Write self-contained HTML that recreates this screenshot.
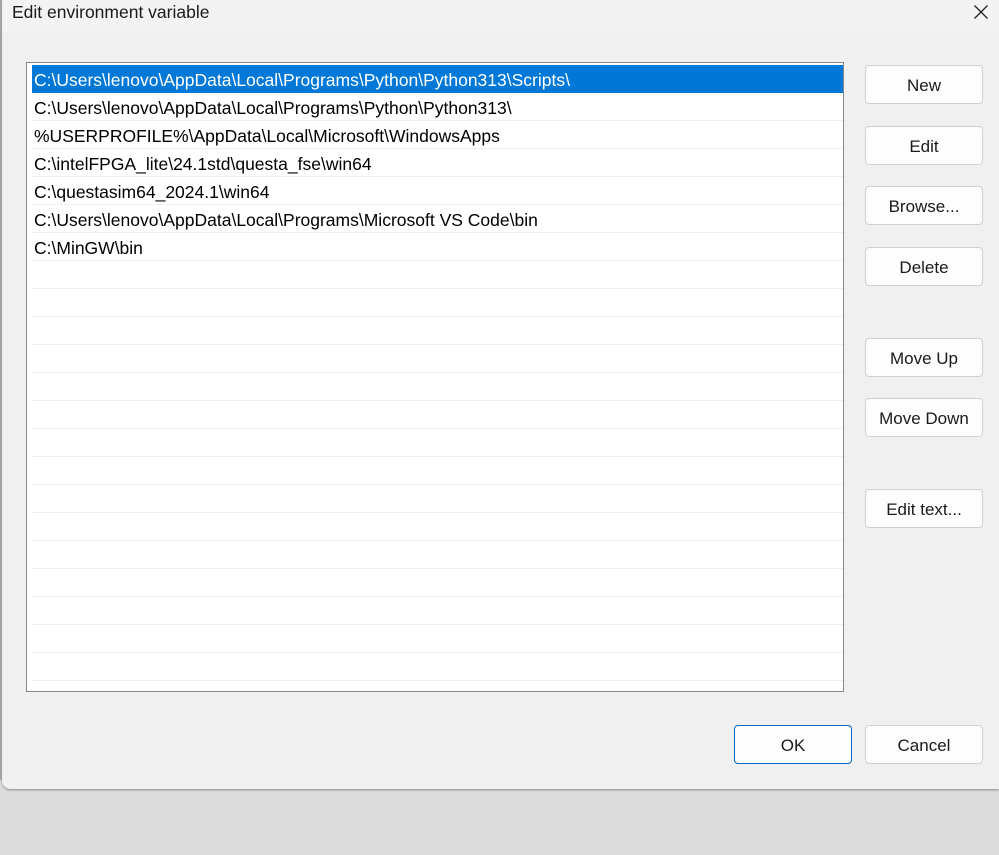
<!DOCTYPE html>
<html><head><style>
*{margin:0;padding:0;box-sizing:border-box}
body{width:999px;height:855px;overflow:hidden;background:linear-gradient(#b4b4b4 0px,#cfcfcf 40px,#dcdcdc 67px);position:relative;font-family:"Liberation Sans",sans-serif;color:#000}
.dlg{position:absolute;left:2px;top:0;width:997px;height:789px;background:#f0f0f0;border-bottom-left-radius:8px;box-shadow:0 1px 2px #888}
.strip{position:absolute;left:0;top:0;width:2px;height:780px;background:#a9a9a9}
.title{position:absolute;left:0;top:0;width:997px;height:32px;background:#f3f3f3}
.title span{position:absolute;left:10px;top:2px;font-size:17.5px;color:#1a1a1a}
.x{position:absolute;left:971px;top:4px}
.list{position:absolute;left:24px;top:62px;width:818px;height:630px;background:#fff;border:1px solid #828790;overflow:hidden}
.row{position:absolute;left:5px;width:811px;height:28px;border-bottom:1px solid #f0f0f0;font-size:17.5px;line-height:31px;padding-left:2px;white-space:nowrap}
.sel{background:#0078d7;color:#fff;border-bottom:none}
.btn{position:absolute;width:118px;height:39px;background:#fdfdfd;border:1px solid #d0d0d0;border-radius:4px;font-size:17px;text-align:center;line-height:39px;color:#1a1a1a}
.ok{border:1px solid #0067c0}
</style></head><body>
<div class="strip"></div>
<div class="dlg">
<div class="title"><span>Edit environment variable</span>
<svg class="x" width="16" height="16" viewBox="0 0 16 16"><path d="M1.5 1.5L14.5 14.5M14.5 1.5L1.5 14.5" stroke="#222" stroke-width="1.3"/></svg></div>
<div class="list">
<div class="row sel" style="top:2px">C:\Users\lenovo\AppData\Local\Programs\Python\Python313\Scripts\</div>
<div class="row" style="top:30px">C:\Users\lenovo\AppData\Local\Programs\Python\Python313\</div>
<div class="row" style="top:58px">%USERPROFILE%\AppData\Local\Microsoft\WindowsApps</div>
<div class="row" style="top:86px">C:\intelFPGA_lite\24.1std\questa_fse\win64</div>
<div class="row" style="top:114px">C:\questasim64_2024.1\win64</div>
<div class="row" style="top:142px">C:\Users\lenovo\AppData\Local\Programs\Microsoft VS Code\bin</div>
<div class="row" style="top:170px">C:\MinGW\bin</div>
<div class="row" style="top:198px"></div><div class="row" style="top:226px"></div><div class="row" style="top:254px"></div><div class="row" style="top:282px"></div><div class="row" style="top:310px"></div><div class="row" style="top:338px"></div><div class="row" style="top:366px"></div><div class="row" style="top:394px"></div><div class="row" style="top:422px"></div><div class="row" style="top:450px"></div><div class="row" style="top:478px"></div><div class="row" style="top:506px"></div><div class="row" style="top:534px"></div><div class="row" style="top:562px"></div><div class="row" style="top:590px"></div>
</div>
<div class="btn" style="left:863px;top:65px">New</div>
<div class="btn" style="left:863px;top:126px">Edit</div>
<div class="btn" style="left:863px;top:186px">Browse...</div>
<div class="btn" style="left:863px;top:247px">Delete</div>
<div class="btn" style="left:863px;top:338px">Move Up</div>
<div class="btn" style="left:863px;top:398px">Move Down</div>
<div class="btn" style="left:863px;top:489px">Edit text...</div>
<div class="btn ok" style="left:732px;top:725px">OK</div>
<div class="btn" style="left:863px;top:725px">Cancel</div>
</div>
</body></html>
